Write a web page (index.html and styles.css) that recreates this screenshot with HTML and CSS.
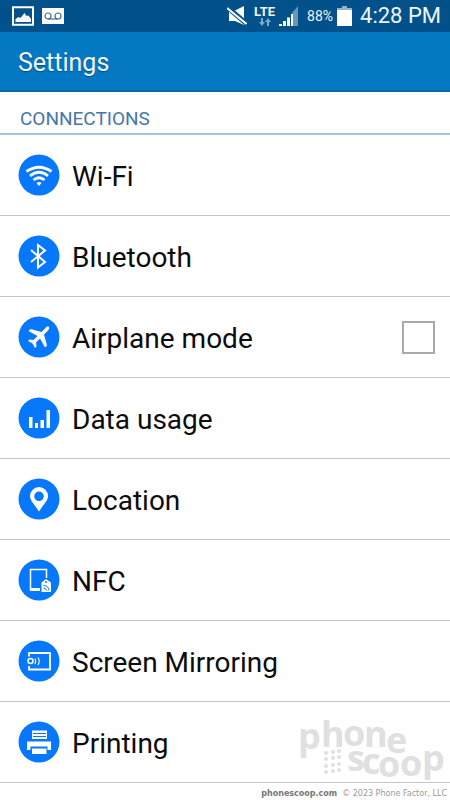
FILE: index.html
```html
<!DOCTYPE html>
<html lang="en">
<head>
<meta charset="utf-8">
<meta name="viewport" content="width=device-width, initial-scale=1">
<title>Settings</title>
<link rel="stylesheet" href="styles.css">
</head>
<body>
<div class="status">
  <svg class="picture-icon" width="22" height="20" viewBox="0 0 22 20"><path d="M1 1.2h20v17.6H1z" fill="none" stroke="#fff" stroke-width="2"/><path d="M3.5 16v-3l3-2 2 1 4-5 2 3 2-.5 2.500 3.500v3z" fill="#fff"/></svg>
  <svg width="22" height="16" viewBox="0 0 22 16"><path d="M0 0h22v16H0z" fill="#fff"/><g fill="none" stroke="#456f91" stroke-width="1.200"><circle cx="6" cy="8" r="3"/><circle cx="16" cy="8" r="3"/><path d="M6 11h10"/></g></svg>
  <div class="status-right">
    <svg width="20" height="20" viewBox="0 0 20 20"><path d="M2 5h5l10-5v19l-9-4H2z" fill="#fff"/><path d="M0 1l20 17" stroke="#03518a" stroke-width="5"/><path d="M0 2l19.500 16" stroke="#fff" stroke-width="2"/></svg>
    <div class="network"><span class="lte">LTE</span>
      <svg width="12" height="8" viewBox="0 0 12 8"><path d="M2 0h2v4h2L3 8 0 4h2zM8 8h2V4h2L9 0 6 4h2z" fill="#7fabc9"/></svg>
    </div>
    <svg class="signal" width="20" height="20" viewBox="0 0 20 20"><path d="M13 7l6-7v20h-6z" fill="#6997b8"/><path d="M0 18h3v2H0zM4 15h3v5H4zM8 11.500h3V20H8zM12 8h2v12h-2z" fill="#fff"/></svg>
    <span class="percent">88%</span>
    <svg class="battery" width="15" height="20" viewBox="0 0 15 20"><path d="M5 0h5v2h5v3H0V2h5z" fill="#91b4cc"/><path d="M0 4h15v16H0z" fill="#fff"/></svg>
    <time class="clock">4:28 PM</time>
  </div>
</div>
<header class="title-bar"><h1>Settings</h1></header>
<main>
  <h2>CONNECTIONS</h2>
  <ul>
    <li><a class="row" href="#wifi">
      <svg class="icon" viewBox="0 0 42 42"><circle cx="21" cy="21" r="20.500"/><g fill="none" stroke="#fff" stroke-width="2.800"><path d="M8.500 17.500q12.500-8.500 25 0M12 21.800q9-7 18 0M15.500 26q5.500-4.500 11 0"/></g><path d="M18.500 29q2.500-2 5 0L21 32z" fill="#fff"/></svg>
      <span>Wi-Fi</span></a></li>
    <li><a class="row" href="#bluetooth">
      <svg class="icon" viewBox="0 0 42 42"><circle cx="21" cy="21" r="20.500"/><path d="M13 15l14 12-7 5.500V10l7 5.500L13 27" fill="none" stroke="#fff" stroke-width="2"/></svg>
      <span>Bluetooth</span></a></li>
    <li><label class="row" for="airplane">
      <svg class="icon" viewBox="0 0 42 42"><circle cx="21" cy="21" r="20.500"/><path d="M30.500 10.500c1.500 1 .5 3-1 4.500l-3.500 3.500 3 11-2 2-5-9-4 4 .5 4-1.500 1.500-2.500-4.500-4.500-2.500 1.500-1.500 4 .5 4-4-9-5 2-2 11 3 3.500-3.500c1.500-1.500 2.500-2.500 3.500-2z" fill="#fff"/></svg>
      <span>Airplane mode</span><input type="checkbox" id="airplane"></label></li>
    <li><a class="row" href="#data">
      <svg class="icon" viewBox="0 0 42 42"><circle cx="21" cy="21" r="20.500"/><path d="M11 20h3.500v11H11zM17 26h3v5h-3zM22.500 23H26v8h-3.500zM28.500 13H32v18h-3.500z" fill="#fff"/></svg>
      <span>Data usage</span></a></li>
    <li><a class="row" href="#location">
      <svg class="icon" viewBox="0 0 42 42"><circle cx="21" cy="21" r="20.500"/><path fill-rule="evenodd" d="M21 9a9 9 0 0 1 9 9c0 5-5 9-9 15.500C17 27 12 23 12 18a9 9 0 0 1 9-9zm0 4.500a4.800 4.800 0 1 0 0 9.600 4.800 4.800 0 0 0 0-9.600z" fill="#fff"/></svg>
      <span>Location</span></a></li>
    <li><a class="row" href="#nfc">
      <svg class="icon" viewBox="0 0 42 42"><circle cx="21" cy="21" r="20.500"/><path d="M22 30.500h-9.500v-20H28.500V19" fill="none" stroke="#fff" stroke-width="1.500"/><path d="M12 29h10v3H12z" fill="#fff"/><path d="M28 20l5 3.500V33h-9.500v-9.500z" fill="#fff"/><circle cx="28" cy="23" r="1"/><g class="ink"><path d="M25.500 26.500q5 0 5.500 5M25.500 29q2.500 0 3 2.500"/></g></svg>
      <span>NFC</span></a></li>
    <li><a class="row" href="#mirroring">
      <svg class="icon" viewBox="0 0 42 42"><circle cx="21" cy="21" r="20.500"/><g fill="none" stroke="#fff"><path d="M11 16.500v-3.500h21v16.500H11V26" stroke-width="1.800"/><circle cx="12.500" cy="21" r="2.500" stroke-width="1.500"/><path d="M17 18.500q1.500 2.500 0 5.500M20 17.500q2.500 3.500 0 7.500" stroke-width="1.200"/></g></svg>
      <span>Screen Mirroring</span></a></li>
    <li><a class="row" href="#printing">
      <svg class="icon" viewBox="0 0 42 42"><circle cx="21" cy="21" r="20.500"/><path d="M14 9.500h15V18H14zM9 20.500h24V29h-3.500v-3.500h-17V29H9zM14 27.500h14.500V33H14z" fill="#fff"/><path class="ink" d="M15 12.500h13M15 15.500h13"/></svg>
      <span>Printing</span></a></li>
  </ul>
</main>
<footer><a href="#home">phonescoop.com</a><span>© 2023 Phone Factor, LLC</span></footer>
<svg class="watermark" width="150" height="70" viewBox="0 0 150 70" role="img" aria-label="phone scoop">
  <text x="-2 21 43 64 86" y="32 30 29 30 36">phone</text>
  <text x="47 62 78 100 122" y="54 57 60 59 54">scoop</text>
  <g><circle cx="26" cy="36" r="2"/><circle cx="33" cy="35" r="2"/><circle cx="39" cy="34" r="2"/><circle cx="26" cy="42" r="2"/><circle cx="33" cy="41" r="2"/><circle cx="39" cy="40" r="2"/><circle cx="26" cy="49" r="2"/><circle cx="33" cy="48" r="2"/><circle cx="39" cy="47" r="2"/><circle cx="26" cy="55" r="2"/><circle cx="33" cy="54" r="2"/><circle cx="39" cy="53" r="2"/></g>
</svg>
</body>
</html>
```
FILE: styles.css
```css
* { box-sizing: border-box; }
body {
  position: relative;
  min-height: 100vh;
  margin: 0;
  background: #fff;
  color: #0c0c0c;
  font-family: Roboto, sans-serif;
}
.status {
  display: flex;
  align-items: center;
  gap: 8px;
  height: 32px;
  padding: 0 9px 0 12px;
  background: #03518a;
  color: #eef6fb;
}
.status-right {
  display: flex;
  align-items: center;
  gap: 4px;
  margin-left: auto;
}
.network {
  display: flex;
  flex-direction: column;
  align-items: center;
  margin-left: 3px;
}
.lte { font-size: 13px; line-height: 12px; font-weight: 700; }
.signal { margin-right: 4px; }
.percent { font-size: 14px; }
.clock { margin-left: 4px; font-size: 22px; line-height: 32px; }
.title-bar {
  display: flex;
  align-items: center;
  height: 60px;
  padding: 2px 18px 0;
  background: #0578c3;
  border-bottom: 2px solid #0868ad;
}
h1 {
  margin: 0;
  color: #f2f8fc;
  font-size: 25px;
  font-weight: 400;
  text-shadow: 0 1px 1px #064c7e;
}
h2 {
  height: 43px;
  margin: 0;
  padding: 14px 20px 0;
  border-bottom: 2px solid #a9c5d8;
  color: #4676a8;
  font-size: 19px;
  line-height: 26px;
  font-weight: 400;
}
ul { margin: 0; padding: 0; list-style: none; }
.row {
  display: flex;
  align-items: center;
  gap: 12px;
  height: 81px;
  padding: 0 15px 0 18px;
  border-bottom: 1px solid #c4c4c4;
  color: inherit;
  font-size: 28px;
  text-decoration: none;
}
.row span { padding-top: 3px; }
.icon { width: 42px; height: 42px; flex: none; fill: #0778fb; }
.ink { fill: none; stroke: #0778fb; stroke-width: 1; }
input {
  appearance: none;
  width: 33px;
  height: 33px;
  margin: 0 0 0 auto;
  border: 2px solid #aaa;
  background: #fff;
}
input:checked { background: #0778fb; }
footer {
  display: flex;
  justify-content: flex-end;
  gap: 5px;
  padding: 4px 3px 0;
  color: #999;
  font: 8px/14px "DejaVu Sans", sans-serif;
}
footer a { color: #777; font-weight: 700; text-decoration: none; }
.watermark {
  position: absolute;
  right: 0;
  bottom: 14px;
  overflow: visible;
  fill: #e0e0e0;
  font: 700 36px "Open Sans", sans-serif;
  pointer-events: none;
}
```
